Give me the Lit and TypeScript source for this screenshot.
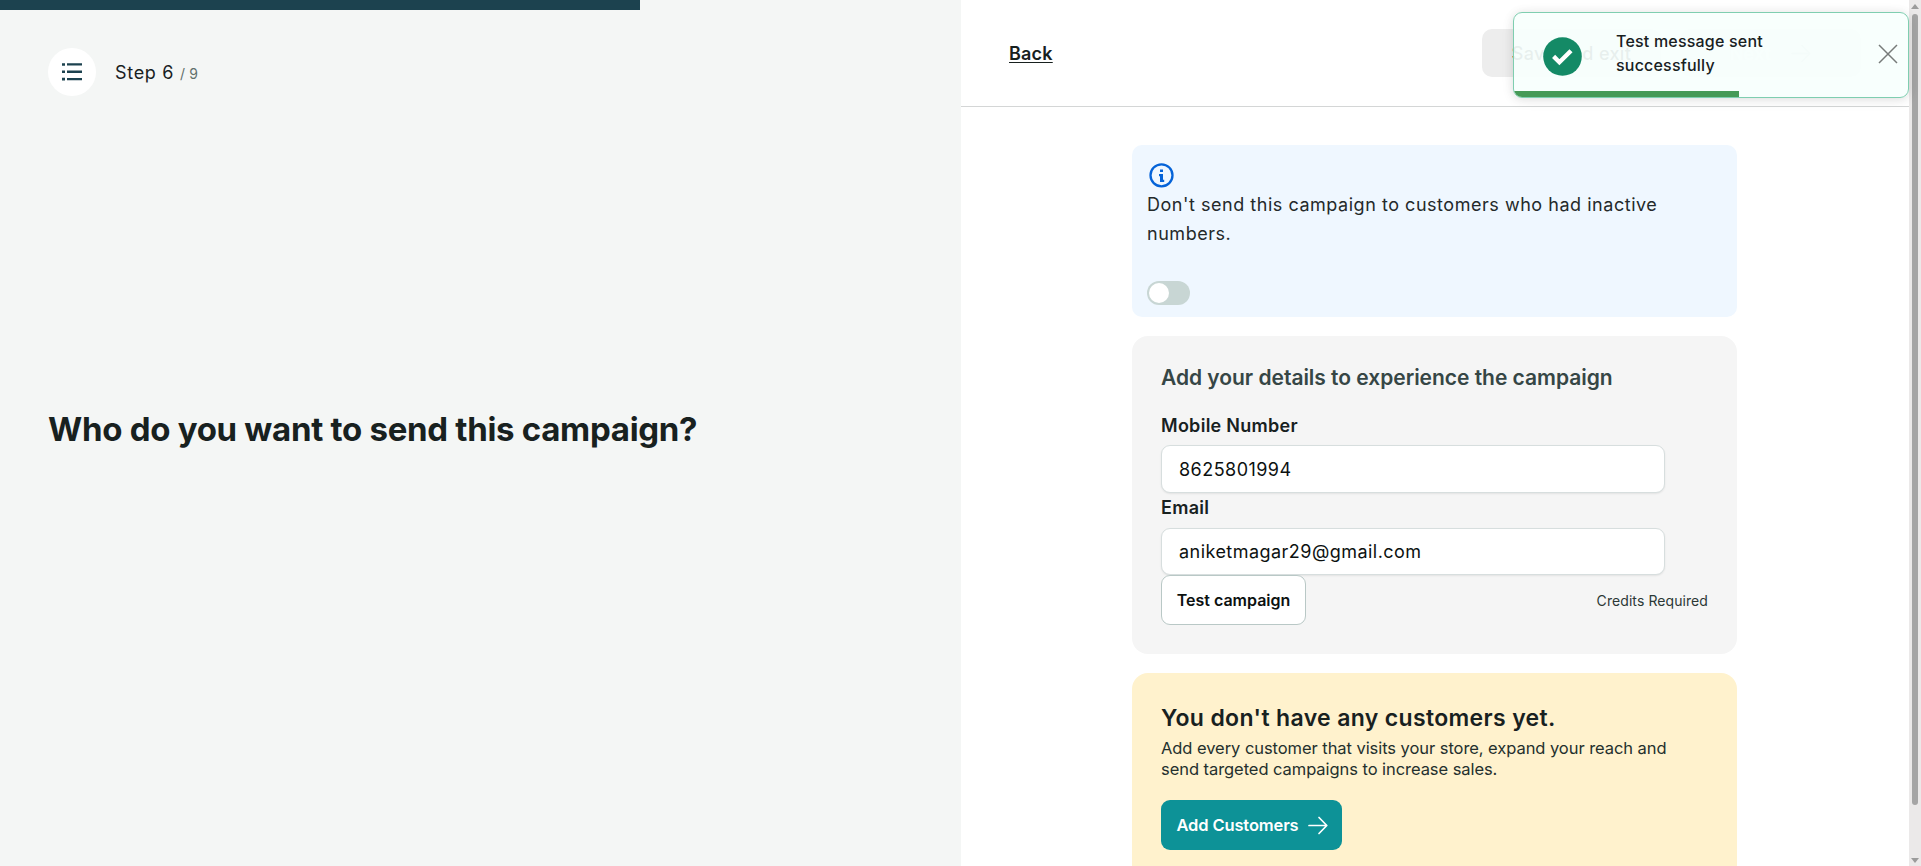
import { LitElement, html, css } from "lit";

const arrow = html`<svg class="arrow" width="20" height="20" viewBox="0 0 20 20" fill="none" stroke="currentColor" stroke-width="1.7" stroke-linecap="round" stroke-linejoin="round"><path d="M1 10.5H18.5M11 2.5L18.8 10.5L11 18.5" /></svg>`;

class StepToast extends LitElement {
  static properties = { progress: { type: Number } };
  progress = 57;
  static styles = css`
    :host {
      position: absolute; top: 12px; left: 1513px; width: 396px; height: 86px;
      box-sizing: border-box; border: 1px solid #7fceb0; border-radius: 9px;
      background: rgba(248, 255, 253, 0.93); overflow: hidden;
      box-shadow: 0 1px 10px rgba(0, 0, 0, 0.1), 0 2px 15px rgba(0, 0, 0, 0.05);
      display: flex; flex-direction: column;
    }
    .row { display: flex; flex: 1; }
    .tick { margin: 24px 0 0 28.5px; width: 39px; height: 39px; }
    .msg {
      margin: 15.5px 0 0 34.5px; width: 180px; height: 48px;
      font: 500 16px/24px Inter, sans-serif; letter-spacing: 0.2px; color: #18211f;
    }
    .x { margin: 30.5px 0 0 auto; width: 20px; height: 20px; padding-right: 10px; }
    .bar { height: 6px; background: #469a57; }
  `;
  render() {
    return html`
      <div class="row">
        <svg class="tick" viewBox="0 0 39 39"><circle cx="19.5" cy="19.5" r="19.3" fill="#148a66" /><path d="M10.6 19.4L16.4 25.2L28 13.7" fill="none" stroke="#fff" stroke-width="4.4" /></svg>
        <div class="msg">Test message sent<br />successfully</div>
        <svg class="x" viewBox="0 0 20 20" fill="none" stroke="#777b7a" stroke-width="1.5"><path d="M1 1L19 19M19 1L1 19" /></svg>
      </div>
      <div class="bar" style="width:${this.progress}%"></div>`;
  }
}
customElements.define("step-toast", StepToast);

class AppRoot extends LitElement {
  static styles = css`
    :host {
      display: flex; position: relative; height: 866px; overflow: hidden;
      font-family: Inter, "Open Sans", sans-serif; color: #18211f; background: #fff;
    }
    * { box-sizing: border-box; }
    .left { width: 961px; background: #f4f6f5; display: flex; flex-direction: column; }
    .progress { height: 10px; width: 640px; background: #1c424f; }
    .step { display: flex; align-items: center; margin: 38px 0 0 48px; height: 48px; }
    .circle { width: 48px; height: 48px; border-radius: 50%; background: #fff; display: flex; align-items: center; justify-content: center; }
    .num { margin-left: 19px; padding-top: 2px; font-size: 18px; letter-spacing: 0.7px; line-height: 24px; white-space: nowrap; }
    .num small { font-size: 14px; letter-spacing: 0.2px; color: #62706c; }
    h1 { margin: 308px 0 0 48px; font: 700 33px/50px Inter, sans-serif; letter-spacing: -0.29px; white-space: nowrap; }
    .right { width: 948px; display: flex; flex-direction: column; }
    header { height: 107px; flex: none; border-bottom: 1px solid #d4d6d6; display: flex; align-items: center; padding: 0 48px; gap: 19px; }
    .back { margin-right: auto; font-weight: 600; font-size: 18px; letter-spacing: 0.2px; text-decoration: underline; text-decoration-thickness: 1px; text-underline-offset: 2px; }
    .btn { height: 48px; border-radius: 10px; background: #ededed; display: flex; align-items: center; justify-content: center; font-weight: 500; font-size: 18px; letter-spacing: 0.35px; }
    .save { width: 179px; color: #18211f; }
    .next { width: 181px; color: #fff; gap: 20px; }
    .next .arrow { color: #c8cccb; }
    main { width: 605px; margin: 38px 0 0 171px; display: flex; flex-direction: column; }
    .card { flex: none; }
    .info { height: 172px; border-radius: 10px; background: #eff7ff; padding: 17px 15px 12px; display: flex; flex-direction: column; }
    .info p { margin: 0; padding-top: 1px; font-size: 18px; line-height: 29px; letter-spacing: 0.53px; white-space: nowrap; color: #24292a; }
    .toggle { margin-top: auto; width: 43px; height: 24px; border-radius: 12px; background: #c8d6d4; padding: 2px; }
    .knob { width: 20px; height: 20px; border-radius: 50%; background: #fff; }
    .details { margin-top: 19px; height: 318px; border-radius: 16px; background: #f5f5f5; padding: 0 29px; display: flex; flex-direction: column; }
    h2 { margin: 27px 0 0; font: 600 21px/30px Inter, sans-serif; letter-spacing: -0.03px; color: #364645; white-space: nowrap; }
    label { font-weight: 600; font-size: 18px; line-height: 26px; letter-spacing: 0.28px; }
    .mobile { margin-top: 20px; }
    .input { width: 504px; height: 48px; border: 1px solid #d7dede; border-radius: 9px; background: #fff; box-shadow: 0 1px 2px rgba(0, 0, 0, 0.08); padding: 1px 17px 0; display: flex; align-items: center; font-size: 18px; letter-spacing: 0.46px; color: #0c1110; flex: none; }
    .mobile + .input { margin-top: 6px; }
    .email { margin-top: 2px; }
    .email + .input { margin-top: 7px; height: 47px; padding-top: 0; }
    .foot { display: flex; justify-content: space-between; align-items: center; }
    .test { width: 145px; height: 50px; border: 1px solid #b9c8c6; border-radius: 9px; background: #fff; display: flex; align-items: center; justify-content: center; font-weight: 600; font-size: 16px; color: #0c1110; }
    .credits { font-size: 14px; letter-spacing: 0.08px; color: #2c3836; }
    .empty { margin-top: 19px; height: 240px; border-radius: 16px; background: #fff2cd; padding: 29px 29px 0; }
    h3 { margin: 0; font: 600 23px/32px Inter, sans-serif; letter-spacing: 0.35px; white-space: nowrap; }
    .empty p { margin: 4px 0 0; font-size: 16.5px; line-height: 21px; letter-spacing: -0.06px; white-space: nowrap; color: #24302e; }
    .add { margin-top: 20px; width: 181px; height: 50px; border-radius: 9px; background: #0d9297; color: #fff; display: flex; align-items: center; justify-content: center; gap: 9px; padding-left: 1px; font-weight: 600; font-size: 16.5px; letter-spacing: -0.13px; }
    .scroll { width: 12px; background: #ebe9e9; display: flex; flex-direction: column; align-items: center; padding: 4px 0 3px; }
    .up, .down { width: 0; height: 0; border: 4px solid transparent; }
    .up { border-top: 0; border-bottom: 5px solid #9b9b9b; }
    .down { border-bottom: 0; border-top: 5px solid #9b9b9b; margin-top: auto; }
    .thumb { margin-top: 5px; width: 6px; height: 791px; border-radius: 3px; background: #a5a5a5; }
  `;
  render() {
    return html`
      <section class="left">
        <div class="progress"></div>
        <div class="step">
          <div class="circle"><svg width="20" height="18" viewBox="0 0 20 18" fill="#1c424f"><path d="M0 0.2h3v2.6H0zM5 0.2h15v2.4H5zM0 7.5h3v2.6H0zM5 7.6h15v2.4H5zM0 14.8h3v2.6H0zM5 14.9h15v2.4H5z" /></svg></div>
          <div class="num">Step 6 <small>/ 9</small></div>
        </div>
        <h1>Who do you want to send this campaign?</h1>
      </section>
      <section class="right">
        <header>
          <span class="back">Back</span>
          <div class="btn save">Save and exit</div>
          <div class="btn next">Next ${arrow}</div>
        </header>
        <main>
          <div class="card info">
            <svg width="27" height="27" viewBox="0 0 27 27" fill="none"><circle cx="14.5" cy="13.3" r="11" stroke="#0563d8" stroke-width="2.3" /><path d="M13 7.4h3v2.6h-3zM12 12h4v5.8h1.2V20H13v-5.8h-1z" fill="#0563d8" /></svg>
            <p>Don't send this campaign to customers who had inactive<br />numbers.</p>
            <div class="toggle"><div class="knob"></div></div>
          </div>
          <div class="card details">
            <h2>Add your details to experience the campaign</h2>
            <label class="mobile">Mobile Number</label>
            <div class="input">8625801994</div>
            <label class="email">Email</label>
            <div class="input">aniketmagar29@gmail.com</div>
            <div class="foot"><div class="test">Test campaign</div><span class="credits">Credits Required</span></div>
          </div>
          <div class="card empty">
            <h3>You don't have any customers yet.</h3>
            <p>Add every customer that visits your store, expand your reach and<br />send targeted campaigns to increase sales.</p>
            <div class="add">Add Customers ${arrow}</div>
          </div>
        </main>
      </section>
      <div class="scroll"><div class="up"></div><div class="thumb"></div><div class="down"></div></div>
      <step-toast></step-toast>`;
  }
}
customElements.define("app-root", AppRoot);
